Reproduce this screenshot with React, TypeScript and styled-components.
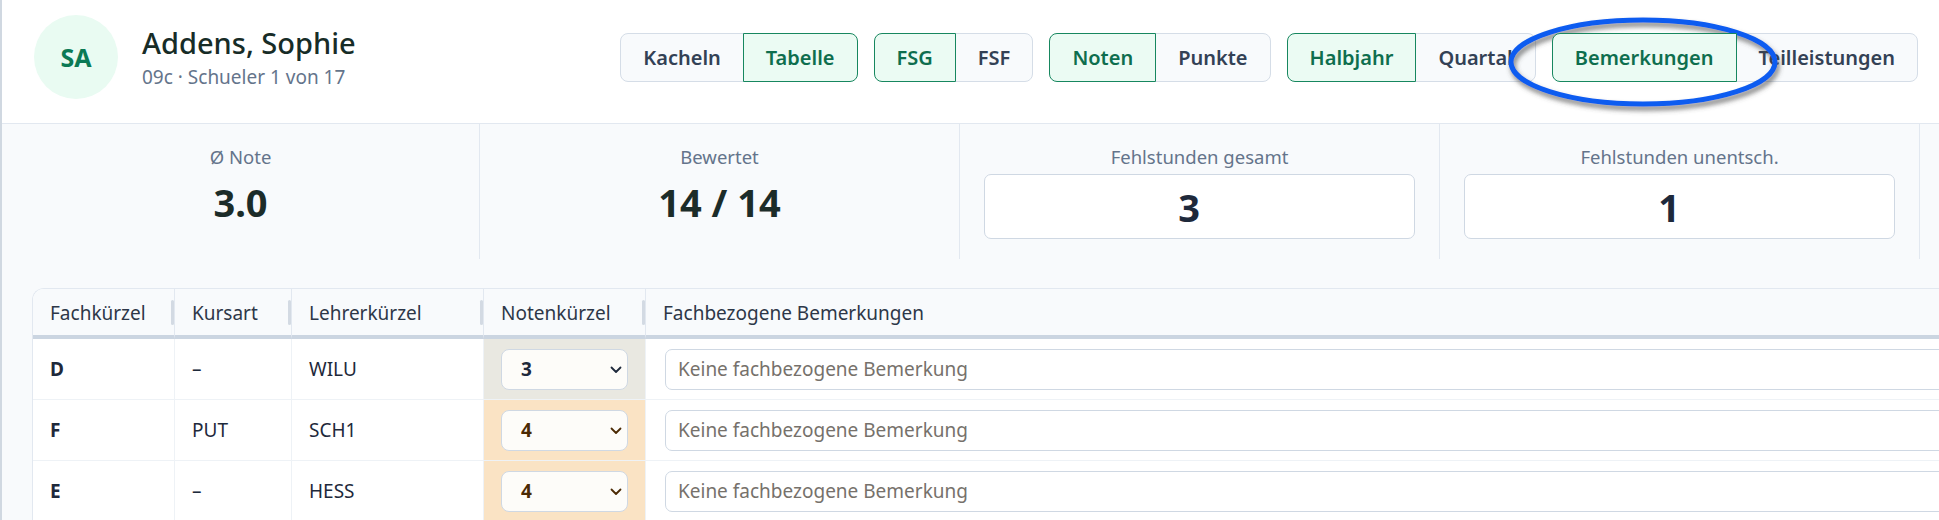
import styled, { createGlobalStyle } from "styled-components";

const GlobalStyle = createGlobalStyle`
  html, body {
    margin: 0;
    padding: 0;
    overflow: hidden;
    background: #ffffff;
    font-family: "Noto Sans", "Open Sans", sans-serif;
  }
  * {
    box-sizing: border-box;
  }
`;

const Page = styled.div`
  position: relative;
  width: 100vw;
  height: 520px;
  overflow: hidden;
`;

const Card = styled.div`
  width: 100%;
  border-left: 2px solid #d0d8e1;
  background: #f8fafc;
  min-height: 520px;
`;

const Header = styled.header`
  display: flex;
  align-items: center;
  justify-content: space-between;
  height: 124px;
  padding: 15px 21px 24px 32px;
  background: #ffffff;
  border-bottom: 1px solid #e2e8f0;
`;

const Identity = styled.div`
  display: flex;
  align-items: center;
  gap: 24px;
`;

const Avatar = styled.div`
  width: 84px;
  height: 84px;
  border-radius: 50%;
  background: #e9fbf2;
  color: #0b7a55;
  font-weight: 700;
  font-size: 25px;
  display: flex;
  align-items: center;
  justify-content: center;
`;

const NameBlock = styled.div`
  display: flex;
  flex-direction: column;
`;

const Name = styled.div`
  font-size: 29px;
  font-weight: 500;
  line-height: 36px;
  color: #172c27;
`;

const Sub = styled.div`
  margin-top: 3px;
  font-size: 19px;
  line-height: 26px;
  color: #64748b;
`;

const Toolbar = styled.div`
  display: flex;
  align-items: center;
  gap: 16px;
`;

const Group = styled.div`
  display: flex;
`;

const Segment = styled.button<{ $active?: boolean }>`
  position: relative;
  height: 49px;
  padding: 0 22px;
  margin-left: -1px;
  font-family: "Noto Sans", sans-serif;
  font-size: 20px;
  font-weight: 600;
  cursor: pointer;
  background: ${({ $active }) => ($active ? "#ebfbf3" : "#f8fafc")};
  color: ${({ $active }) => ($active ? "#0e6e4e" : "#334155")};
  border: 1px solid ${({ $active }) => ($active ? "#17875f" : "#d5dde7")};
  z-index: ${({ $active }) => ($active ? 1 : 0)};

  &:first-child {
    margin-left: 0;
    border-radius: 8px 0 0 8px;
  }
  &:last-child {
    border-radius: 0 8px 8px 0;
  }
`;

const StatsGrid = styled.div`
  display: grid;
  grid-template-columns: 478px repeat(4, 480px);
`;

const StatCell = styled.div`
  display: flex;
  flex-direction: column;
  align-items: center;
  height: 135px;
  padding: 20px 24px 19px;
  border-right: 1px solid #e2e8f0;
`;

const StatLabel = styled.div`
  font-size: 18.5px;
  line-height: 26px;
  color: #64748b;
`;

const StatValue = styled.div`
  margin-top: 4px;
  font-size: 38px;
  line-height: 56px;
  font-weight: 700;
  color: #1c2c29;
`;

const StatBox = styled.div`
  margin-top: 4px;
  width: 100%;
  height: 65px;
  display: flex;
  align-items: center;
  justify-content: center;
  padding-right: 21px;
  background: #ffffff;
  border: 1px solid #cfd8e3;
  border-radius: 7px;
  font-size: 38px;
  font-weight: 700;
  color: #1e293b;
`;

const TableWrap = styled.div`
  margin: 29px 0 0 30px;
  width: 2000px;
  border: 1px solid #e2e8f0;
  border-right: none;
  border-bottom: none;
  border-radius: 12px 0 0 0;
  overflow: hidden;
  background: #ffffff;
`;

const Table = styled.table`
  border-collapse: separate;
  border-spacing: 0;
  table-layout: fixed;
  width: 100%;
`;

const Th = styled.th`
  position: relative;
  height: 50px;
  padding: 2px 17px 0;
  text-align: left;
  font-size: 19px;
  font-weight: 400;
  color: #2d3748;
  background: #f8fafc;
  border-bottom: 4px solid #cbd5e1;
  border-right: 1px solid #e2e8f0;
  white-space: nowrap;

  &::after {
    content: "";
    position: absolute;
    right: 0;
    top: 11px;
    width: 3px;
    height: 25px;
    border-radius: 2px;
    background: #d3dae3;
  }
  &:last-child::after {
    display: none;
  }
`;

const Td = styled.td<{ $bold?: boolean; $tone?: "neutral" | "warn"; $wide?: boolean }>`
  height: 61px;
  padding: 0 ${({ $wide }) => ($wide ? "19px" : "17px")};
  font-size: 19px;
  font-weight: ${({ $bold }) => ($bold ? 700 : 400)};
  color: #1e293b;
  border-bottom: 1px solid #eef2f6;
  border-right: 1px solid #eef2f6;
  background: ${({ $tone }) =>
    $tone === "neutral" ? "#e9e8e1" : $tone === "warn" ? "#fae3c4" : "#ffffff"};
`;

const SelectWrap = styled.div`
  position: relative;
  width: 100%;
  height: 41px;
`;

const GradeSelect = styled.select<{ $tone: "neutral" | "warn" }>`
  appearance: none;
  width: 100%;
  height: 41px;
  padding: 0 19px;
  border: 1px solid #cfd8e3;
  border-radius: 8px;
  background: #fdfcf9;
  font-family: "Noto Sans", sans-serif;
  font-size: 19px;
  font-weight: 700;
  color: ${({ $tone }) => ($tone === "warn" ? "#4b2a04" : "#1e293b")};
`;

const Chevron = styled.svg`
  position: absolute;
  right: 5px;
  top: 16px;
  pointer-events: none;
`;

const RemarkInput = styled.input`
  width: 100%;
  height: 41px;
  padding: 0 12px;
  border: 1px solid #cfd8e3;
  border-radius: 7px;
  background: #ffffff;
  font-family: "Noto Sans", sans-serif;
  font-size: 19px;
  color: #1e293b;

  &::placeholder {
    color: #76716b;
  }
`;

const Annotation = styled.svg`
  position: absolute;
  left: 1495px;
  top: 0;
  pointer-events: none;
`;

const groups: [string, boolean][][] = [
  [["Kacheln", false], ["Tabelle", true]],
  [["FSG", true], ["FSF", false]],
  [["Noten", true], ["Punkte", false]],
  [["Halbjahr", true], ["Quartal", false]],
  [["Bemerkungen", true], ["Teilleistungen", false]],
];

type Row = {
  fach: string;
  kurs: string;
  lehrer: string;
  note: string;
  tone: "neutral" | "warn";
};

const rows: Row[] = [
  { fach: "D", kurs: "–", lehrer: "WILU", note: "3", tone: "neutral" },
  { fach: "F", kurs: "PUT", lehrer: "SCH1", note: "4", tone: "warn" },
  { fach: "E", kurs: "–", lehrer: "HESS", note: "4", tone: "warn" },
];

export default function App() {
  return (
    <Page>
      <GlobalStyle />
      <Card>
        <Header>
          <Identity>
            <Avatar>SA</Avatar>
            <NameBlock>
              <Name>Addens, Sophie</Name>
              <Sub>09c · Schueler 1 von 17</Sub>
            </NameBlock>
          </Identity>
          <Toolbar>
            {groups.map((g, i) => (
              <Group key={i}>
                {g.map(([label, active]) => (
                  <Segment key={label} $active={active}>
                    {label}
                  </Segment>
                ))}
              </Group>
            ))}
          </Toolbar>
        </Header>

        <StatsGrid>
          <StatCell>
            <StatLabel>Ø Note</StatLabel>
            <StatValue>3.0</StatValue>
          </StatCell>
          <StatCell>
            <StatLabel>Bewertet</StatLabel>
            <StatValue>14 / 14</StatValue>
          </StatCell>
          <StatCell>
            <StatLabel>Fehlstunden gesamt</StatLabel>
            <StatBox>3</StatBox>
          </StatCell>
          <StatCell>
            <StatLabel>Fehlstunden unentsch.</StatLabel>
            <StatBox>1</StatBox>
          </StatCell>
          <StatCell />
        </StatsGrid>

        <TableWrap>
          <Table>
            <colgroup>
              <col style={{ width: 142 }} />
              <col style={{ width: 117 }} />
              <col style={{ width: 192 }} />
              <col style={{ width: 162 }} />
              <col />
            </colgroup>
            <thead>
              <tr>
                <Th>Fachkürzel</Th>
                <Th>Kursart</Th>
                <Th>Lehrerkürzel</Th>
                <Th>Notenkürzel</Th>
                <Th>Fachbezogene Bemerkungen</Th>
              </tr>
            </thead>
            <tbody>
              {rows.map((r) => (
                <tr key={r.fach}>
                  <Td $bold>{r.fach}</Td>
                  <Td>{r.kurs}</Td>
                  <Td>{r.lehrer}</Td>
                  <Td $tone={r.tone}>
                    <SelectWrap>
                      <GradeSelect $tone={r.tone} defaultValue={r.note}>
                        {["1", "2", "3", "4", "5", "6"].map((n) => (
                          <option key={n} value={n}>
                            {n}
                          </option>
                        ))}
                      </GradeSelect>
                      <Chevron width="14" height="9" viewBox="0 0 14 9">
                        <path
                          d="M2.5 2.5l4.5 4.5 4.5-4.5"
                          fill="none"
                          stroke={r.tone === "warn" ? "#4b2a04" : "#1e293b"}
                          strokeWidth="1.8"
                          strokeLinecap="round"
                          strokeLinejoin="round"
                        />
                      </Chevron>
                    </SelectWrap>
                  </Td>
                  <Td $wide>
                    <RemarkInput placeholder="Keine fachbezogene Bemerkung" />
                  </Td>
                </tr>
              ))}
            </tbody>
          </Table>
        </TableWrap>
      </Card>

      <Annotation width="300" height="130" viewBox="0 0 300 130">
        <defs>
          <filter id="annShadow" x="-10%" y="-20%" width="120%" height="150%">
            <feDropShadow dx="2" dy="4" stdDeviation="2.5" floodColor="#4a4a4a" floodOpacity="0.7" />
          </filter>
        </defs>
        <ellipse
          cx="148"
          cy="62"
          rx="132"
          ry="42"
          fill="none"
          stroke="#0b5cf0"
          strokeWidth="5"
          filter="url(#annShadow)"
        />
      </Annotation>
    </Page>
  );
}
